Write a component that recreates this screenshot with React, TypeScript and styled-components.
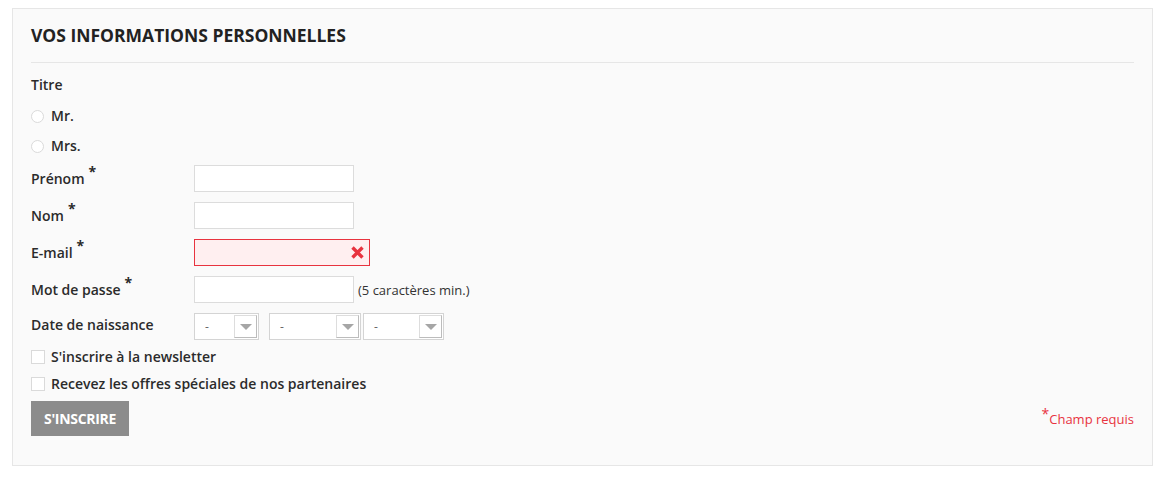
import React, { useState } from "react";
import styled, { createGlobalStyle } from "styled-components";

const RED = "#e8333f";

const GlobalStyle = createGlobalStyle`
  body {
    margin: 0;
    background: #ffffff;
    font-family: "Open Sans", "Noto Sans", Arial, sans-serif;
    color: #333333;
  }
  * { box-sizing: border-box; }
`;

const Panel = styled.section`
  margin: 8px 0 0 12px;
  width: 1141px;
  height: 458px;
  padding: 14px 18px 0 18px;
  background: #fafafa;
  border: 1px solid #e6e6e6;
`;

const Title = styled.h1`
  margin: 0;
  padding-bottom: 15px;
  font-size: 17.5px;
  line-height: 24px;
  font-weight: 700;
  color: #222222;
  text-transform: uppercase;
  border-bottom: 1px solid #e6e6e6;
`;

const Form = styled.form`
  padding-top: 12px;
`;

const Label = styled.div`
  font-size: 14px;
  font-weight: 600;
  line-height: 20px;
  color: #2b2b2b;
`;

const TitleLabel = styled(Label)`
  margin-bottom: 10px;
`;

const RadioRow = styled.label`
  display: flex;
  align-items: center;
  gap: 7px;
  height: 20px;
  margin-bottom: 10px;
  font-size: 14px;
  font-weight: 600;
  color: #2b2b2b;
`;

const Radio = styled.span`
  width: 13px;
  height: 13px;
  margin-top: 3px;
  border: 1px solid #dadada;
  border-radius: 50%;
  background: #ffffff;
`;

const FieldRow = styled.div`
  display: flex;
  align-items: center;
  height: 27px;
  margin-bottom: 10px;
`;

const FieldLabel = styled(Label)<{ $raise?: boolean }>`
  width: 163px;
  flex-shrink: 0;
  margin-top: ${(p) => (p.$raise ? "-3px" : "0")};
`;

const Star = styled.sup`
  margin-left: 4px;
  font-size: 14px;
  font-weight: 700;
  line-height: 0;
  position: relative;
  top: -1px;
`;

const InputWrap = styled.div`
  position: relative;
  display: flex;
`;

const TextInput = styled.input<{ $error?: boolean }>`
  width: ${(p) => (p.$error ? "176px" : "160px")};
  height: 27px;
  padding: 0 8px;
  border: 1px solid ${(p) => (p.$error ? RED : "#dcdcdc")};
  background: ${(p) => (p.$error ? "#ffeff0" : "#ffffff")};
  font-family: inherit;
  font-size: 13px;
  outline: none;
`;

const ErrorIcon = styled.svg`
  position: absolute;
  right: 6px;
  top: 7px;
`;

const Hint = styled.span`
  margin-left: 4px;
  font-size: 13px;
  color: #333333;
`;

const Selects = styled.div`
  display: flex;
`;

const Select = styled.div<{ $w: number; $gap: number }>`
  display: flex;
  align-items: center;
  justify-content: space-between;
  width: ${(p) => p.$w}px;
  height: 27px;
  margin-right: ${(p) => p.$gap}px;
  padding: 0 1px 0 10px;
  background: #ffffff;
  border: 1px solid #d4d4d4;
  font-size: 12px;
  color: #666666;
`;

const Arrow = styled.span`
  display: flex;
  align-items: center;
  justify-content: center;
  width: 23px;
  height: 23px;
  border: 1px solid #dddddd;
  border-right-color: #bcbcbc;
  border-bottom-color: #bcbcbc;
  background: #ffffff;
  &::after {
    content: "";
    border-left: 6px solid transparent;
    border-right: 6px solid transparent;
    border-top: 6px solid #a6a6a6;
  }
`;

const CheckRow = styled.label<{ $first?: boolean }>`
  display: flex;
  align-items: center;
  gap: 6px;
  height: 21px;
  margin-top: ${(p) => (p.$first ? "-4px" : "6px")};
  font-size: 14px;
  font-weight: 600;
  color: #2b2b2b;
`;

const Checkbox = styled.span`
  width: 14px;
  height: 14px;
  border: 1px solid #dadada;
  background: #ffffff;
`;

const Footer = styled.div`
  display: flex;
  justify-content: space-between;
  align-items: flex-start;
  margin-top: 7px;
`;

const Submit = styled.button`
  width: 98px;
  height: 35px;
  border: none;
  background: #8c8c8c;
  color: #ffffff;
  font-family: inherit;
  font-size: 14px;
  font-weight: 700;
  letter-spacing: -0.3px;
  text-transform: uppercase;
  cursor: pointer;
`;

const Required = styled.span`
  margin-top: 9px;
  font-size: 13px;
  color: ${RED};
  sup {
    font-size: 14px;
    line-height: 0;
  }
`;

const fields = [
  { label: "Prénom" },
  { label: "Nom" },
  { label: "E-mail", error: true },
  { label: "Mot de passe", hint: "(5 caractères min.)" },
];

const selects = [
  { w: 65, gap: 10 },
  { w: 92, gap: 2 },
  { w: 81, gap: 0 },
];

export default function App() {
  const [values, setValues] = useState<Record<string, string>>({});

  return (
    <>
      <GlobalStyle />
      <Panel>
        <Title>Vos informations personnelles</Title>
        <Form onSubmit={(e) => e.preventDefault()}>
          <TitleLabel>Titre</TitleLabel>
          <RadioRow>
            <Radio /> Mr.
          </RadioRow>
          <RadioRow>
            <Radio /> Mrs.
          </RadioRow>

          {fields.map((f) => (
            <FieldRow key={f.label}>
              <FieldLabel>
                {f.label}
                <Star>*</Star>
              </FieldLabel>
              <InputWrap>
                <TextInput
                  $error={f.error}
                  value={values[f.label] || ""}
                  onChange={(e) =>
                    setValues({ ...values, [f.label]: e.target.value })
                  }
                />
                {f.error && (
                  <ErrorIcon width="13" height="13" viewBox="0 0 13 13">
                    <path
                      d="M1.5 1.5 L11.5 11.5 M11.5 1.5 L1.5 11.5"
                      stroke={RED}
                      strokeWidth="3.4"
                    />
                  </ErrorIcon>
                )}
              </InputWrap>
              {f.hint && <Hint>{f.hint}</Hint>}
            </FieldRow>
          ))}

          <FieldRow>
            <FieldLabel $raise>Date de naissance</FieldLabel>
            <Selects>
              {selects.map((s, i) => (
                <Select key={i} $w={s.w} $gap={s.gap}>
                  -
                  <Arrow />
                </Select>
              ))}
            </Selects>
          </FieldRow>

          <CheckRow $first>
            <Checkbox /> S'inscrire à la newsletter
          </CheckRow>
          <CheckRow>
            <Checkbox /> Recevez les offres spéciales de nos partenaires
          </CheckRow>

          <Footer>
            <Submit type="submit">S'inscrire</Submit>
            <Required>
              <sup>*</sup>Champ requis
            </Required>
          </Footer>
        </Form>
      </Panel>
    </>
  );
}
